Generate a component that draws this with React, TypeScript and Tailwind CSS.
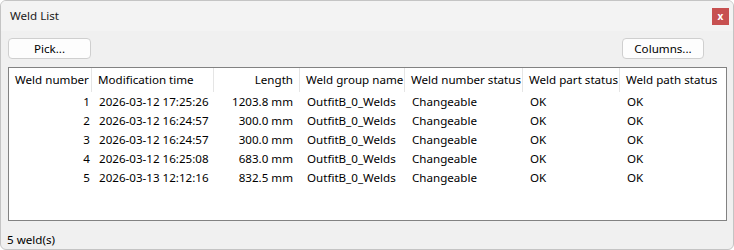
const columns = [
  { label: "Weld number", width: 83, align: "right" },
  { label: "Modification time", width: 122, align: "left" },
  { label: "Length", width: 86, align: "right" },
  { label: "Weld group name", width: 105, align: "left" },
  { label: "Weld number status", width: 118, align: "left" },
  { label: "Weld part status", width: 97, align: "left" },
  { label: "Weld path status", width: 105, align: "left" },
];

const rows = [
  ["1", "2026-03-12 17:25:26", "1203.8 mm", "OutfitB_0_Welds", "Changeable", "OK", "OK"],
  ["2", "2026-03-12 16:24:57", "300.0 mm", "OutfitB_0_Welds", "Changeable", "OK", "OK"],
  ["3", "2026-03-12 16:24:57", "300.0 mm", "OutfitB_0_Welds", "Changeable", "OK", "OK"],
  ["4", "2026-03-12 16:25:08", "683.0 mm", "OutfitB_0_Welds", "Changeable", "OK", "OK"],
  ["5", "2026-03-13 12:12:16", "832.5 mm", "OutfitB_0_Welds", "Changeable", "OK", "OK"],
];

function Button({ children, width }: { children: string; width: string }) {
  return (
    <button
      className={`${width} h-[21px] rounded-[4px] border border-[#cfcfcf] bg-[#fdfdfd] text-black flex items-center justify-center`}
    >
      {children}
    </button>
  );
}

export default function App() {
  return (
    <div className="w-[734px] h-[250px] flex flex-col border border-[#c4c4c4] rounded-[6px] overflow-hidden bg-[#f0f0f0] text-black font-['Noto_Sans',sans-serif] text-[11.6px]">
      {/* Title bar */}
      <div className="h-[30px] shrink-0 bg-[#f3f3f3] flex items-center justify-between pl-[9px] pr-[4px]">
        <span className="text-[#1a1a1a]">Weld List</span>
        <div className="w-[17px] h-[17px] bg-[#c75050] flex items-center justify-center text-white text-[10px] font-bold leading-none pb-[1px]">
          x
        </div>
      </div>

      {/* Toolbar */}
      <div className="flex justify-between pt-[7px] pl-[7px] pr-[29px]">
        <Button width="w-[83px]">Pick...</Button>
        <Button width="w-[82px]">Columns...</Button>
      </div>

      {/* List */}
      <div className="mt-[8px] ml-[7px] mr-[6px] h-[154px] shrink-0 border border-[#828282] bg-white">
        <div className="grid grid-cols-[83px_122px_86px_105px_118px_97px_105px]">
          {columns.map((c, i) => (
            <div
              key={c.label}
              className={`h-[24px] flex items-center whitespace-nowrap overflow-hidden ${
                i < columns.length - 1 ? "border-r border-[#e5e5e5]" : ""
              } ${i === 2 ? "justify-end pr-[6px]" : "pl-[6px]"}`}
            >
              {c.label}
            </div>
          ))}
          {rows.map((r, ri) =>
            r.map((cell, ci) => (
              <div
                key={ri + "-" + ci}
                className={`h-[19px] flex items-center whitespace-nowrap ${
                  ci === 0
                    ? "justify-end pr-[2px]"
                    : columns[ci].align === "right"
                    ? "justify-end pr-[7px]"
                    : "pl-[7px]"
                }`}
              >
                {cell}
              </div>
            ))
          )}
        </div>
      </div>

      {/* Status bar */}
      <div className="flex-1 flex items-center pl-[6px] pt-[9px]">5 weld(s)</div>
    </div>
  );
}
